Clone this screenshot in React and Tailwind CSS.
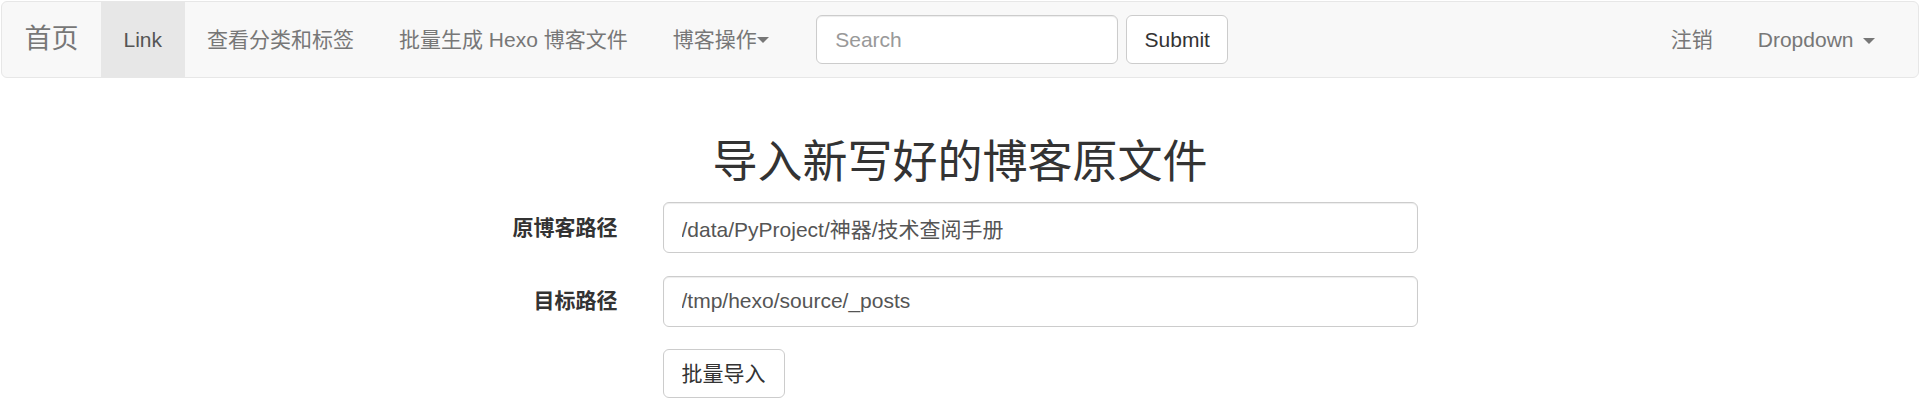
import React from 'react';

const FONT = { fontFamily: '"Liberation Sans", "Noto Sans CJK SC", Arial, sans-serif' };

function Caret() {
  return <span className="inline-block w-0 h-0 border-t-[6px] border-t-[#777] border-x-[6px] border-x-transparent align-middle" />;
}

function NavLink({ children, active }) {
  return (
    <a className={`h-full flex items-center px-[22.5px] text-[21px] ${active ? 'bg-[#e7e7e7] text-[#555]' : 'text-[#777]'}`}>
      {children}
    </a>
  );
}

function FormRow({ label, value }) {
  return (
    <div className="flex mb-[22.5px]">
      <label className="w-[160px] pr-[22.5px] pt-[10.5px] text-right text-[21px] font-bold leading-[30px] text-[#333]">{label}</label>
      <div className="flex-1 px-[22.5px]">
        <input
          defaultValue={value}
          className="w-full h-[51px] px-[18px] text-[21px] text-[#555] bg-white border border-[#ccc] rounded-[6px] shadow-[inset_0_1px_1px_rgba(0,0,0,0.075)] outline-none"
          style={FONT}
        />
      </div>
    </div>
  );
}

export default function App() {
  return (
    <div className="min-h-screen bg-white text-[#333]" style={FONT}>
      {/* 导航栏 */}
      <nav className="mx-[1px] mt-[1px] h-[77px] bg-[#f8f8f8] border border-[#e7e7e7] rounded-[6px] flex justify-between">
        <div className="flex h-full items-center">
          <a className="h-full flex items-center px-[22.5px] text-[27px] text-[#777]">首页</a>
          <NavLink active>Link</NavLink>
          <NavLink>查看分类和标签</NavLink>
          <NavLink>批量生成 Hexo 博客文件</NavLink>
          <NavLink>博客操作<Caret /></NavLink>
          <div className="flex items-center gap-[8px] ml-[25px]">
            <input
              placeholder="Search"
              className="w-[302px] h-[49px] px-[18px] text-[21px] text-[#555] placeholder:text-[#999] bg-white border border-[#ccc] rounded-[6px] shadow-[inset_0_1px_1px_rgba(0,0,0,0.075)] outline-none"
              style={FONT}
            />
            <button className="w-[102px] h-[49px] text-[21px] text-[#333] bg-white border border-[#ccc] rounded-[6px]">Submit</button>
          </div>
        </div>
        <div className="flex h-full items-center pr-[21px]">
          <NavLink>注销</NavLink>
          <NavLink>Dropdown <span className="ml-[9px]"><Caret /></span></NavLink>
        </div>
      </nav>

      {/* 导入表单 */}
      <h1 className="mt-[60px] mb-[14px] text-center text-[45px] leading-[50px] font-normal text-[#333]">导入新写好的博客原文件</h1>
      <div className="w-[960px] mx-auto">
        <FormRow label="原博客路径" value="/data/PyProject/神器/技术查阅手册" />
        <FormRow label="目标路径" value="/tmp/hexo/source/_posts" />
        <div className="pl-[182.5px]">
          <button className="h-[49px] px-[18px] text-[21px] text-[#333] bg-white border border-[#ccc] rounded-[6px]">批量导入</button>
        </div>
      </div>
    </div>
  );
}
